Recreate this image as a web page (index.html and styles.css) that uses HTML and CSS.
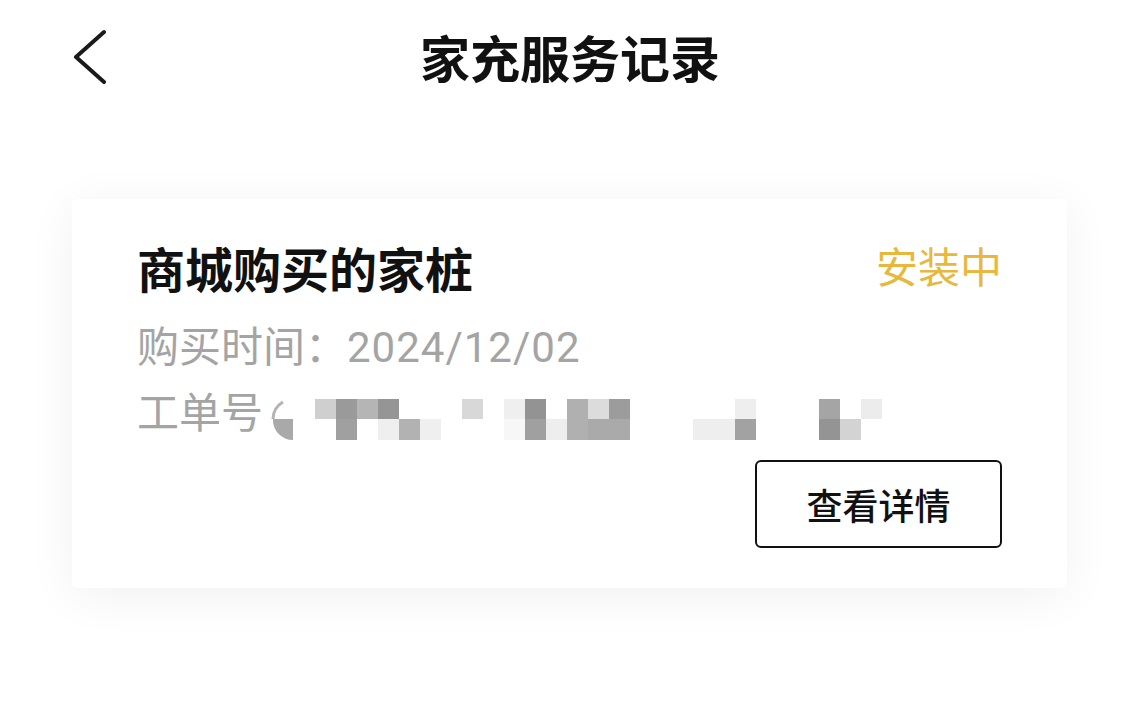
FILE: index.html
```html
<!DOCTYPE html>
<html lang="zh-CN">
<head>
    <meta charset="UTF-8">
    <meta name="viewport" content="width=device-width, initial-scale=1.0">
    <title>家充服务记录</title>
    <link rel="stylesheet" href="styles.css">
</head>
<body>
    <header class="top-bar">
        <div class="back-btn">
            <svg width="36" height="56" viewBox="0 0 36 56">
                <path d="M32 4 L4 29 L32 54" fill="none" stroke="#1a1a1a" stroke-width="4" stroke-linecap="round" stroke-linejoin="round"/>
            </svg>
        </div>
        <h1 class="page-title">家充服务记录</h1>
        <div></div>
    </header>

    <div class="record-card">
        <div class="card-head">
            <h2 class="card-title">商城购买的家桩</h2>
            <span class="status">安装中</span>
        </div>
        <p class="info-line"><span class="cjk">购买时间：</span><span class="date">2024/12/02</span></p>
        <div class="info-line order-line">
            <span class="cjk">工单号</span>
            <svg class="mosaic" width="612" height="41" viewBox="0 0 612 41">
                <path d="M23 20 H3 A20 20 0 0 0 23 41 Z" fill="#a9a9a9"/>
                <path d="M13 3 A20 20 0 0 0 3 20" fill="none" stroke="#b3b3b3" stroke-width="3"/>
                <!-- row 1 -->
                <rect x="45" y="0" width="21" height="20" fill="#cfcfcf"/>
                <rect x="66" y="0" width="21" height="20" fill="#9a9a9a"/>
                <rect x="87" y="0" width="21" height="20" fill="#b5b5b5"/>
                <rect x="108" y="0" width="21" height="20" fill="#959595"/>
                <rect x="192" y="0" width="21" height="20" fill="#d8d8d8"/>
                <rect x="234" y="0" width="21" height="20" fill="#efefef"/>
                <rect x="255" y="0" width="21" height="20" fill="#939393"/>
                <rect x="297" y="0" width="21" height="20" fill="#b0b0b0"/>
                <rect x="318" y="0" width="21" height="20" fill="#dcdcdc"/>
                <rect x="339" y="0" width="21" height="20" fill="#9c9c9c"/>
                <rect x="465" y="0" width="21" height="20" fill="#eeeeee"/>
                <rect x="549" y="0" width="21" height="20" fill="#a5a5a5"/>
                <rect x="591" y="0" width="21" height="20" fill="#ececec"/>
                <!-- row 2 -->
                <rect x="66" y="20" width="21" height="21" fill="#a0a0a0"/>
                <rect x="108" y="20" width="21" height="21" fill="#efefef"/>
                <rect x="129" y="20" width="21" height="21" fill="#b2b2b2"/>
                <rect x="150" y="20" width="21" height="21" fill="#efefef"/>
                <rect x="234" y="20" width="21" height="21" fill="#f7f7f7"/>
                <rect x="255" y="20" width="21" height="21" fill="#a0a0a0"/>
                <rect x="276" y="20" width="21" height="21" fill="#eeeeee"/>
                <rect x="297" y="20" width="21" height="21" fill="#b0b0b0"/>
                <rect x="318" y="20" width="42" height="21" fill="#aaaaaa"/>
                <rect x="423" y="20" width="42" height="21" fill="#eeeeee"/>
                <rect x="465" y="20" width="21" height="21" fill="#a2a2a2"/>
                <rect x="549" y="20" width="21" height="21" fill="#949494"/>
                <rect x="570" y="20" width="21" height="21" fill="#d3d3d3"/>
            </svg>
        </div>
        <div class="card-actions">
            <button class="detail-btn">查看详情</button>
        </div>
    </div>
</body>
</html>
```

FILE: styles.css
```css
body {
    margin: 0;
    min-height: 100vh;
    background-color: #ffffff;
    font-family: Roboto, "Noto Sans CJK SC", sans-serif;
    color: #111;
}

.top-bar {
    display: grid;
    grid-template-columns: 1fr auto 1fr;
    align-items: center;
    height: 112px;
}

.back-btn {
    display: flex;
    align-items: center;
    padding-left: 72px;
}

.back-btn svg {
    display: block;
}

.page-title {
    margin: 0;
    font-size: 50px;
    line-height: 1;
    font-weight: 700;
    font-family: "Noto Sans CJK SC", sans-serif;
    color: #111;
}

.record-card {
    margin: 87px 0 0 72px;
    width: 995px;
    box-sizing: border-box;
    padding: 44px 65px 40px;
    background-color: #fff;
    border-radius: 5px;
    box-shadow: 0 8px 48px rgba(0, 0, 0, 0.06);
}

.card-head {
    display: flex;
    justify-content: space-between;
    align-items: center;
}

.card-title {
    margin: 0;
    font-family: "Noto Sans CJK SC", sans-serif;
    font-size: 48px;
    line-height: 48px;
    font-weight: 700;
    color: #111;
}

.status {
    font-family: "Noto Sans CJK SC", sans-serif;
    font-size: 42px;
    line-height: 42px;
    color: #e8b83c;
    margin-top: -4px;
}

.info-line {
    margin: 32px 0 0;
    font-size: 42px;
    line-height: 42px;
    color: #a4a4a4;
}

.cjk {
    font-family: "Noto Sans CJK SC", sans-serif;
}

.date {
    letter-spacing: 1px;
}

.order-line {
    margin-top: 20px;
    height: 42px;
    display: flex;
    align-items: flex-start;
}

.mosaic {
    display: block;
    flex-shrink: 0;
    margin: 10px 0 0 7px;
}

.card-actions {
    display: flex;
    justify-content: flex-end;
    margin-top: 29px;
}

.detail-btn {
    width: 247px;
    height: 88px;
    box-sizing: border-box;
    border: 2px solid #111;
    border-radius: 6px;
    background-color: #fff;
    font-family: "Noto Sans CJK SC", sans-serif;
    font-size: 36px;
    font-weight: 500;
    color: #111;
    padding: 0;
}
```
